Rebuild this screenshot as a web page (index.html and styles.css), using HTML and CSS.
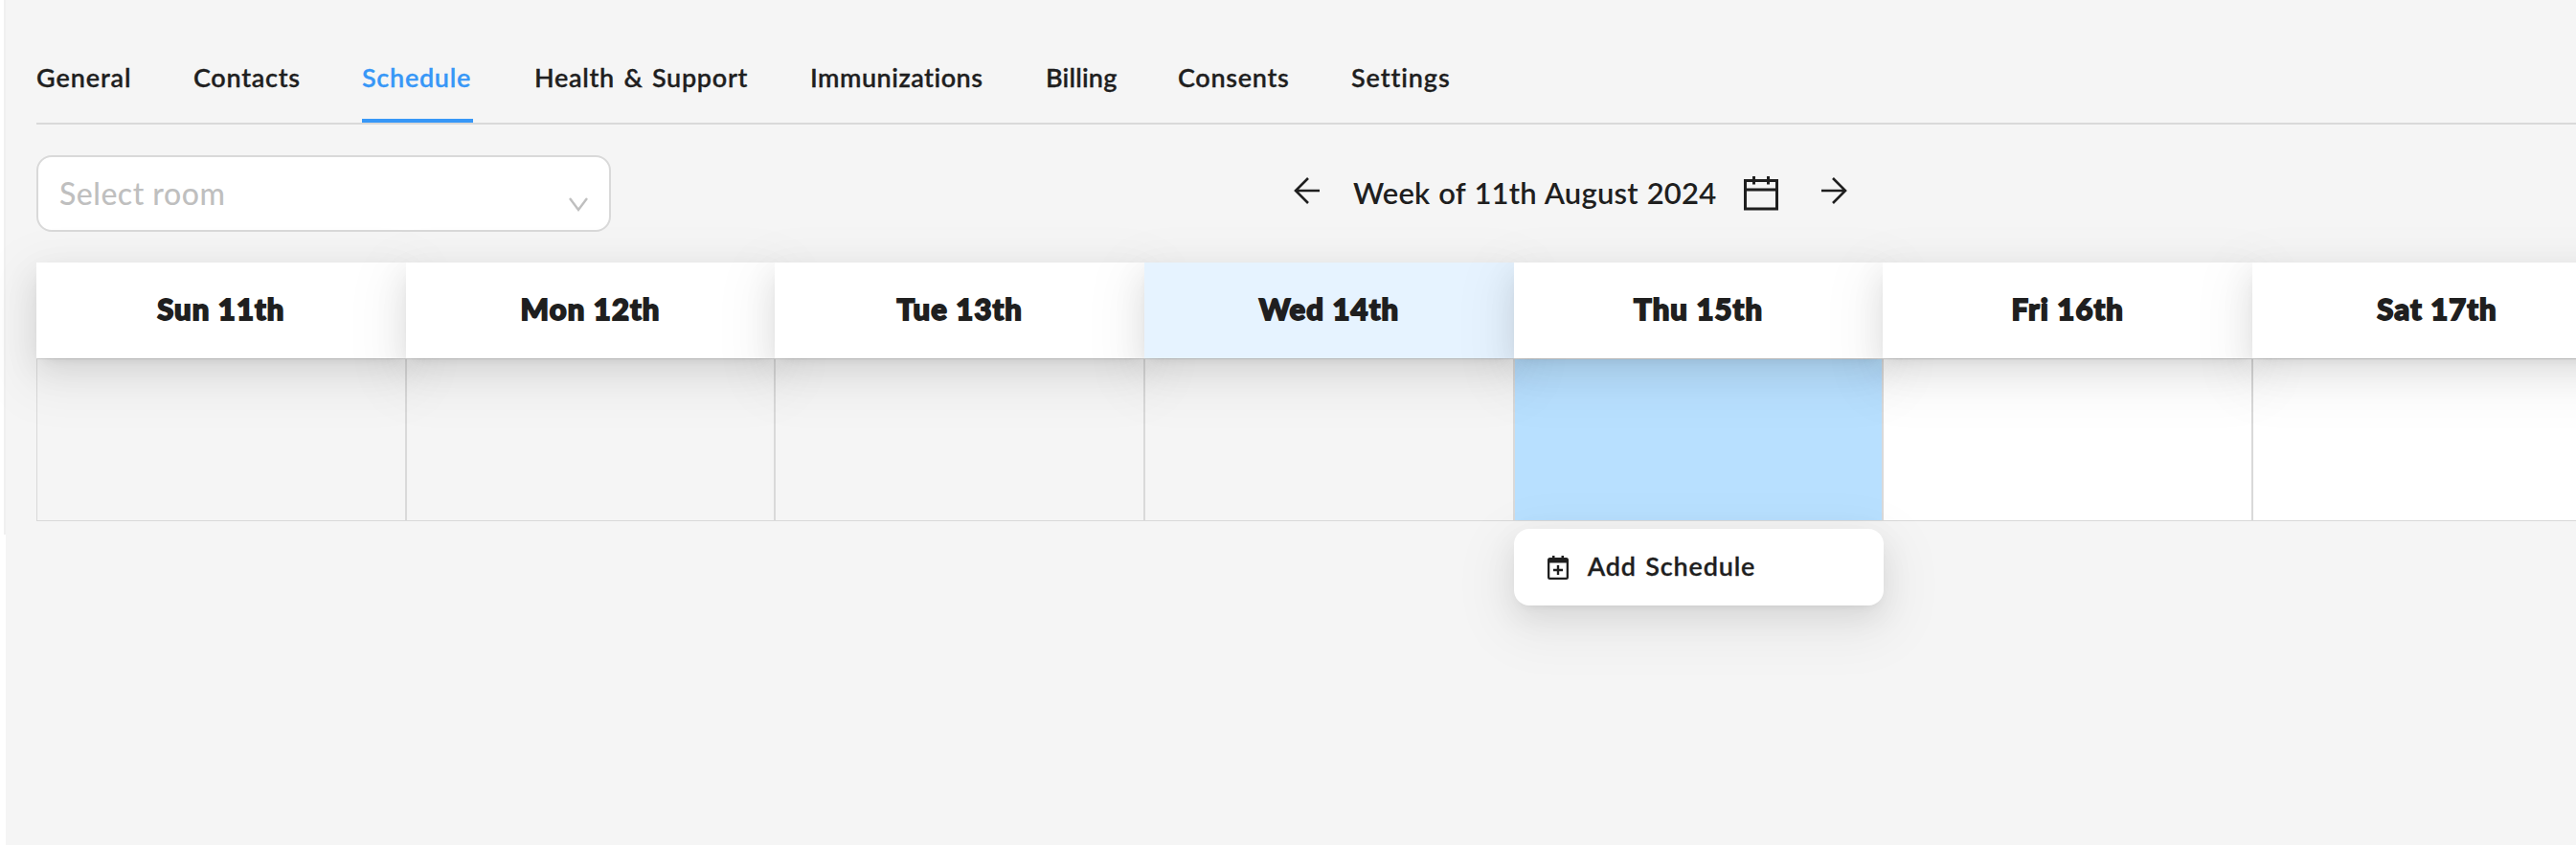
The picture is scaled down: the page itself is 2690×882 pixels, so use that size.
FILE: index.html
```html
<!DOCTYPE html>
<html lang="en">
<head>
    <meta charset="UTF-8">
    <title>Schedule</title>
    <link rel="stylesheet" href="styles.css">
</head>
<body>
    <div class="page">
        <nav class="tabs">
            <a class="tab general">General</a>
            <a class="tab contacts">Contacts</a>
            <a class="tab schedule active">Schedule</a>
            <a class="tab health">Health &amp; Support</a>
            <a class="tab immunizations">Immunizations</a>
            <a class="tab billing">Billing</a>
            <a class="tab consents">Consents</a>
            <a class="tab settings">Settings</a>
        </nav>

        <div class="toolbar">
            <div class="select">
                <span class="placeholder">Select room</span>
                <svg class="chevron" width="20" height="16" viewBox="0 0 20 16"><path d="M1 1l9 12 9-12"/></svg>
            </div>
            <div class="week">
                <svg class="arrow" width="28" height="28" viewBox="0 0 28 28"><path d="M27 14H2M15 1L2 14l13 13"/></svg>
                <span class="week-label">Week of 11th August 2024</span>
                <svg class="calendar" width="36" height="38" viewBox="0 0 36 38"><path d="M1.500 5.500h33v29.500h-33zM1.500 15h33M10.500 1v8.500M25.500 1v8.500"/></svg>
                <svg class="arrow" width="28" height="28" viewBox="0 0 28 28"><path d="M1 14h25M13 1l13 13-13 13"/></svg>
            </div>
        </div>

        <div class="grid">
            <div class="day"><span>Sun 11th</span></div>
            <div class="day"><span>Mon 12th</span></div>
            <div class="day"><span>Tue 13th</span></div>
            <div class="day today"><span>Wed 14th</span></div>
            <div class="day"><span>Thu 15th</span></div>
            <div class="day"><span>Fri 16th</span></div>
            <div class="day"><span>Sat 17th</span></div>
            <div class="cell past"></div>
            <div class="cell past"></div>
            <div class="cell past"></div>
            <div class="cell past"></div>
            <div class="cell selected">
                <div class="menu">
                    <svg class="add" width="22" height="25" viewBox="0 0 22 25">
                        <path class="fill" d="M2.500 2H5V0h2.500v2h7V0H17v2h2.500Q22 2 22 4.500v18Q22 25 19.500 25h-17Q0 25 0 22.500v-18Q0 2 2.500 2zM2.300 7.500v15.200h17.400V7.500z"/>
                        <path class="plus" d="M11 10v10M6 15h10"/>
                    </svg>
                    <span>Add Schedule</span>
                </div>
            </div>
            <div class="cell"></div>
            <div class="cell"></div>
        </div>
    </div>
</body>
</html>
```
FILE: styles.css
```css
* { margin: 0; padding: 0; box-sizing: border-box; }
body {
    height: 882px;
    overflow: hidden;
    background: #f5f5f5;
    font-family: Lato, "Liberation Sans", sans-serif;
    color: #1f1f1f;
}
.page {
    height: 882px;
    overflow: hidden;
    padding-left: 38px;
    background: linear-gradient(#fff, #fff) 0 0 / 4px 558px no-repeat,
                linear-gradient(#f0f0f0, #f0f0f0) 4px 0 / 2px 558px no-repeat,
                linear-gradient(#fff, #fff) 0 558px / 6px 324px no-repeat;
}

/* tabs */
.tabs {
    display: grid;
    grid-template-columns: 100px 112px 116px 224px 182px 74px 117px 104px;
    column-gap: 64px;
    height: 130px;
    border-bottom: 2px solid #d9d9d9;
}
.tab {
    padding-top: 64px;
    font-size: 27px;
    line-height: 34px;
    font-weight: 600;
    letter-spacing: .7px;
    white-space: nowrap;
    -webkit-text-stroke: .3px currentColor;
}
.general, .settings { letter-spacing: .9px; }
.health { word-spacing: 2px; }
.immunizations { letter-spacing: .5px; }
.billing { letter-spacing: .2px; }
.tab.active {
    color: #3797f7;
    border-bottom: 4px solid #3797f7;
}

/* room select and week picker */
.toolbar {
    display: flex;
    height: 144px;
    padding-top: 32px;
}
.select {
    display: flex;
    justify-content: space-between;
    width: 600px;
    height: 80px;
    padding: 0 22px;
    border: 2px solid #d9d9d9;
    border-radius: 16px;
    background: #fff;
    font-size: 32px;
    line-height: 75px;
    font-weight: 500;
    letter-spacing: .5px;
    color: #bfbfbf;
}
.chevron { margin-top: 42px; }
.week {
    display: flex;
    height: 80px;
    margin-left: 713px;
}
.week-label {
    width: 381px;
    margin: 0 27px 0 34px;
    font-size: 31px;
    line-height: 79px;
    font-weight: 600;
    letter-spacing: .2px;
    word-spacing: 1px;
    white-space: nowrap;
}
.arrow { margin-top: 23px; }
.calendar { margin: 21px 44px 0 0; }
svg { flex: none; display: block; }
svg path {
    fill: none;
    stroke: #1f1f1f;
    stroke-width: 2.6;
}
.calendar path { stroke-width: 3; }
.chevron path { stroke: #bfbfbf; stroke-width: 2.4; }
.add .fill { fill: #1f1f1f; stroke: none; }

/* week grid */
.grid {
    display: grid;
    grid-template-columns: repeat(7, 385.7px);
    grid-template-rows: 100px 170px;
}
.day {
    position: relative;
    z-index: 1;
    background: #fff;
    text-align: center;
    font-size: 31px;
    line-height: 97px;
    font-weight: 900;
    letter-spacing: 1.1px;
    -webkit-text-stroke: 1.8px #1f1f1f;
    box-shadow: 0 12px 32px rgba(0, 0, 0, .09), 0 6px 12px -8px rgba(0, 0, 0, .14), 0 18px 56px 16px rgba(0, 0, 0, .05);
}
.day.today { background: #e6f3ff; }
.cell {
    border: 1px solid #d9d9d9;
    background: #fff;
}
.cell.past { background: #f5f5f5; }
.cell.selected {
    position: relative;
    background: #b8e0ff;
}
.menu {
    position: absolute;
    top: 177px;
    left: -1px;
    display: flex;
    gap: 20px;
    width: 386px;
    height: 80px;
    padding-left: 35px;
    border-radius: 16px;
    background: #fff;
    font-size: 27px;
    line-height: 77px;
    font-weight: 600;
    letter-spacing: .8px;
    word-spacing: 2px;
    -webkit-text-stroke: .3px currentColor;
    box-shadow: 0 12px 32px rgba(0, 0, 0, .08), 0 6px 12px -8px rgba(0, 0, 0, .12), 0 18px 56px 16px rgba(0, 0, 0, .05);
}
.add { margin-top: 28px; }
.add .plus { stroke-width: 2.4; }
```
